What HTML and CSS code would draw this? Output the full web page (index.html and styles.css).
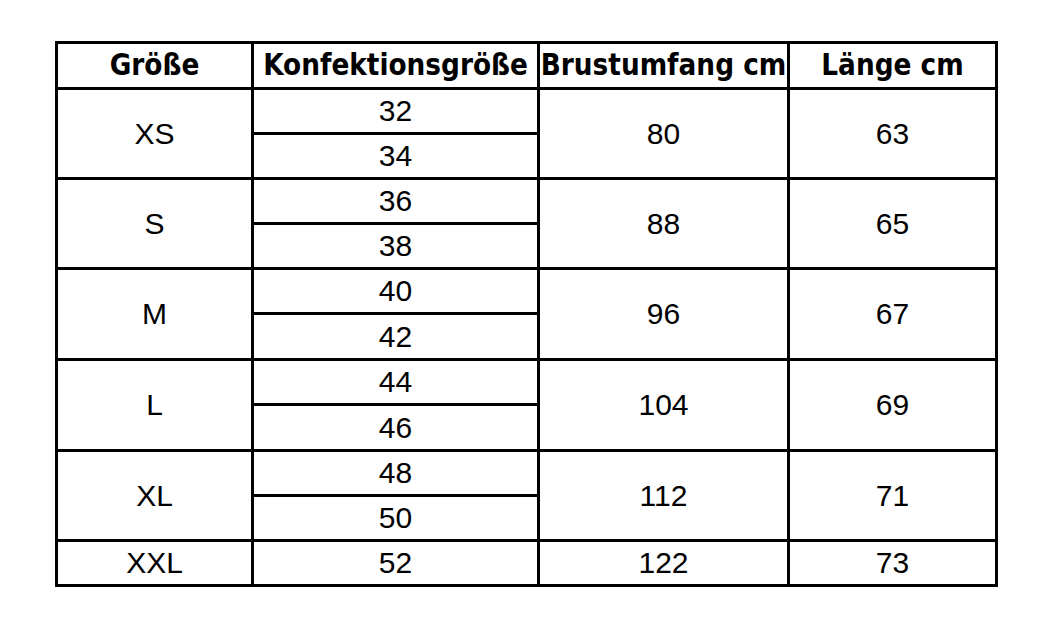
FILE: index.html
```html
<!DOCTYPE html>
<html lang="de">
<head>
<meta charset="utf-8">
<title>Größentabelle</title>
<link rel="stylesheet" href="styles.css">
</head>
<body>
<div class="page">
<table class="sizes">
  <colgroup>
    <col class="c1"><col class="c2"><col class="c3"><col class="c4">
  </colgroup>
  <thead>
    <tr class="head"><th>Größe</th><th>Konfektionsgröße</th><th>Brustumfang cm</th><th>Länge cm</th></tr>
  </thead>
  <tbody>
    <tr><td rowspan="2">XS</td><td>32</td><td rowspan="2">80</td><td rowspan="2">63</td></tr>
    <tr><td>34</td></tr>
    <tr><td rowspan="2">S</td><td>36</td><td rowspan="2">88</td><td rowspan="2">65</td></tr>
    <tr><td>38</td></tr>
    <tr><td rowspan="2">M</td><td>40</td><td rowspan="2">96</td><td rowspan="2">67</td></tr>
    <tr class="tall"><td>42</td></tr>
    <tr><td rowspan="2">L</td><td>44</td><td rowspan="2">104</td><td rowspan="2">69</td></tr>
    <tr class="tall"><td>46</td></tr>
    <tr><td rowspan="2">XL</td><td>48</td><td rowspan="2">112</td><td rowspan="2">71</td></tr>
    <tr><td>50</td></tr>
    <tr><td>XXL</td><td>52</td><td>122</td><td>73</td></tr>
  </tbody>
</table>
</div>
</body>
</html>
```
FILE: styles.css
```css
html, body {
  margin: 0;
  padding: 0;
  background: #ffffff;
}
.page {
  padding: 41px 0 0 55px;
}
.sizes {
  border-collapse: collapse;
  table-layout: fixed;
  width: 943px;
  font-family: "Liberation Sans", Arial, sans-serif;
  color: #000;
}
.c1 { width: 196px; }
.c2 { width: 286px; }
.c3 { width: 250px; }
.c4 { width: 208px; }
.sizes th, .sizes td {
  border: 3px solid #000;
  padding: 0;
  text-align: center;
  vertical-align: middle;
  line-height: 1;
}
.sizes th {
  font-family: "DejaVu Sans Condensed", "DejaVu Sans", sans-serif;
  font-weight: bold;
  font-size: 29.3px;
  letter-spacing: 0;
  white-space: nowrap;
  height: 43px;
}
.sizes td {
  font-size: 30px;
  height: 42px;
}
.sizes tr.tall td {
  height: 43px;
}
.sizes tbody tr:not(:last-child) td[rowspan] {
  height: auto;
}
```
